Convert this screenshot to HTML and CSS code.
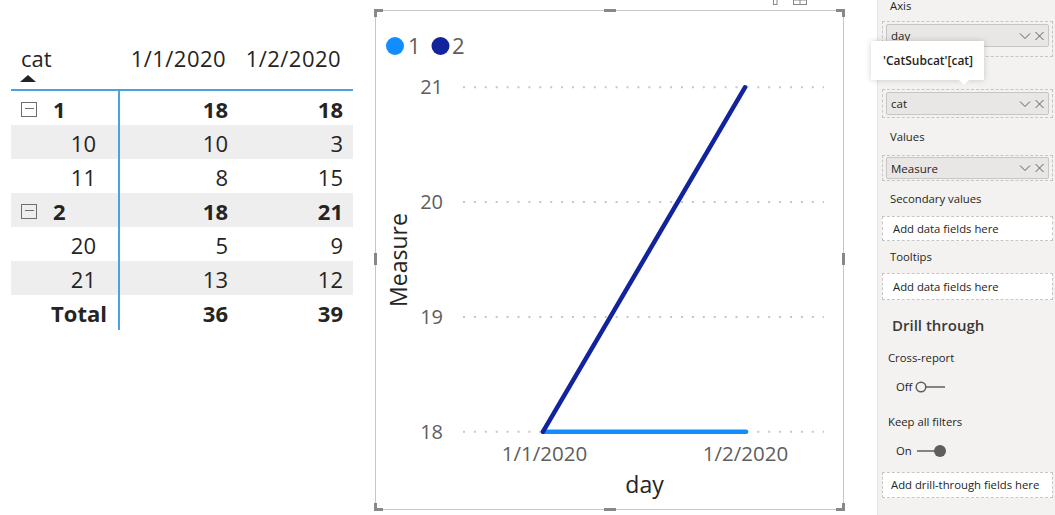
FILE: index.html
```html
<!DOCTYPE html>
<html>
<head>
<meta charset="utf-8">
<link rel="stylesheet" href="styles.css">
</head>
<body>
<div class="page">
  <section class="matrix">
    <div class="mhead">
      <div class="hcell hcat"><span>cat</span><i class="sort"></i></div>
      <div class="hcell num">1/1/2020</div>
      <div class="hcell num">1/2/2020</div>
    </div>
    <div class="row parent"><div class="c1"><span class="exp"></span>1</div><div class="n">18</div><div class="n">18</div></div>
    <div class="row alt"><div class="c1">10</div><div class="n">10</div><div class="n">3</div></div>
    <div class="row"><div class="c1">11</div><div class="n">8</div><div class="n">15</div></div>
    <div class="row parent alt"><div class="c1"><span class="exp"></span>2</div><div class="n">18</div><div class="n">21</div></div>
    <div class="row"><div class="c1">20</div><div class="n">5</div><div class="n">9</div></div>
    <div class="row alt"><div class="c1">21</div><div class="n">13</div><div class="n">12</div></div>
    <div class="row total"><div class="c1">Total</div><div class="n">36</div><div class="n">39</div></div>
  </section>

  <section class="chart">
    <svg class="topicons" width="40" height="11" viewBox="0 0 40 11">
      <rect x="1.5" y="-4" width="3.5" height="8.5" fill="none" stroke="#8a8886" stroke-width="1"/>
      <rect x="21.5" y="-4" width="13" height="8.5" fill="none" stroke="#8a8886" stroke-width="1"/>
      <line x1="28" y1="0" x2="28" y2="4.5" stroke="#8a8886" stroke-width="1"/>
      <line x1="21.5" y1="0" x2="34.5" y2="0" stroke="#8a8886" stroke-width="1"/>
    </svg>
    <svg class="plot" width="467" height="498" viewBox="0 0 467 498">
      <circle cx="19" cy="35" r="9" fill="#118DFF"/>
      <text x="32" y="43" class="legend">1</text>
      <circle cx="64.5" cy="35" r="9" fill="#12239E"/>
      <text x="76" y="43" class="legend">2</text>

      <g class="grid">
        <line x1="87" y1="76.3" x2="448" y2="76.3"/>
        <line x1="87" y1="191" x2="448" y2="191"/>
        <line x1="87" y1="305.9" x2="448" y2="305.9"/>
        <line x1="87" y1="420.7" x2="448" y2="420.7"/>
      </g>
      <g class="ylab">
        <text x="67" y="83">21</text>
        <text x="67" y="198">20</text>
        <text x="67" y="313">19</text>
        <text x="67" y="428">18</text>
      </g>
      <text class="axtitle" text-anchor="middle" transform="translate(31,249) rotate(-90)">Measure</text>

      <line x1="167" y1="420.7" x2="370" y2="420.7" stroke="#118DFF" stroke-width="4.5" stroke-linecap="round"/>
      <line x1="167" y1="420.7" x2="369" y2="76.3" stroke="#12239E" stroke-width="4.5" stroke-linecap="round"/>

      <g class="xlab">
        <text x="168.5" y="450" text-anchor="middle">1/1/2020</text>
        <text x="369.5" y="450" text-anchor="middle">1/2/2020</text>
      </g>
      <text class="axtitle" x="268.5" y="482" text-anchor="middle">day</text>
    </svg>
    <i class="h tl"></i><i class="h tr"></i><i class="h bl"></i><i class="h br"></i>
    <i class="h tc"></i><i class="h bc"></i><i class="h ml"></i><i class="h mr"></i>
  </section>

  <aside class="panel">
    <div class="lbl lbl-axis">Axis</div>
    <div class="well well-axis">
      <div class="pill"><span>day</span><span class="pill-icons"><svg width="26" height="12" viewBox="0 0 26 12"><polyline points="1,3.5 6,8.5 11,3.5" fill="none" stroke="#605e5c" stroke-width="1"/><path d="M16.5 2 L24.5 10 M24.5 2 L16.5 10" stroke="#605e5c" stroke-width="1"/></svg></span></div>
    </div>
    <div class="lbl lbl-legend">Legend</div>
    <div class="well">
      <div class="pill"><span>cat</span><span class="pill-icons"><svg width="26" height="12" viewBox="0 0 26 12"><polyline points="1,3.5 6,8.5 11,3.5" fill="none" stroke="#605e5c" stroke-width="1"/><path d="M16.5 2 L24.5 10 M24.5 2 L16.5 10" stroke="#605e5c" stroke-width="1"/></svg></span></div>
    </div>
    <div class="lbl lbl-values">Values</div>
    <div class="well well-values">
      <div class="pill"><span>Measure</span><span class="pill-icons"><svg width="26" height="12" viewBox="0 0 26 12"><polyline points="1,3.5 6,8.5 11,3.5" fill="none" stroke="#605e5c" stroke-width="1"/><path d="M16.5 2 L24.5 10 M24.5 2 L16.5 10" stroke="#605e5c" stroke-width="1"/></svg></span></div>
    </div>
    <div class="lbl lbl-sec">Secondary values</div>
    <div class="drop drop-sec">Add data fields here</div>
    <div class="lbl lbl-tt">Tooltips</div>
    <div class="drop drop-tt">Add data fields here</div>
    <div class="heading">Drill through</div>
    <div class="lbl lbl-cross">Cross-report</div>
    <div class="toggle">Off <svg width="36" height="14" viewBox="0 0 36 14"><circle cx="7" cy="7" r="4.8" fill="none" stroke="#605e5c" stroke-width="1.5"/><line x1="11.8" y1="7" x2="31" y2="7" stroke="#605e5c" stroke-width="1.5"/></svg></div>
    <div class="lbl lbl-keep">Keep all filters</div>
    <div class="toggle on">On <svg width="36" height="14" viewBox="0 0 36 14"><line x1="1" y1="7" x2="20" y2="7" stroke="#605e5c" stroke-width="1.5"/><circle cx="24" cy="7" r="6" fill="#605e5c"/></svg></div>
    <div class="drop drop-drill">Add drill-through fields here</div>

    <div class="tip">'CatSubcat'[cat]<i class="tip-arrow"></i></div>
  </aside>
</div>
</body>
</html>
```

FILE: styles.css
```css
* { box-sizing: border-box; }
html, body { margin: 0; padding: 0; background: #ffffff; }
body {
  width: 1055px;
  height: 515px;
  overflow: hidden;
  font-family: "Open Sans", "Noto Sans", sans-serif;
  color: #252423;
}
.page { display: flex; height: 515px; }

/* ---------- matrix ---------- */
.matrix { margin-left: 11px; width: 342px; flex: none; font-size: 22px; }
.mhead {
  display: grid;
  grid-template-columns: 109px 118px 115px;
  height: 91px;
  border-bottom: 2px solid #4aa3df;
}
.hcell { padding-top: 42px; line-height: 32px; white-space: nowrap; }
.hcat { padding-left: 10px; }
.hcell.num { text-align: right; padding-right: 12px; letter-spacing: 0.45px; }
.sort {
  display: block;
  width: 0; height: 0;
  border-left: 8px solid transparent;
  border-right: 8px solid transparent;
  border-bottom: 7px solid #252423;
  margin: 1px 0 0 -1px;
}
.row {
  display: grid;
  grid-template-columns: 109px 118px 115px;
  height: 34px;
  line-height: 34px;
}
.row.alt { background: #eeeeee; }
.row .c1 {
  border-right: 2px solid #4aa3df;
  text-align: right;
  padding-right: 22px;
  padding-top: 1px;
}
.row .n { text-align: right; padding-right: 10px; padding-top: 1px; }
.row.parent, .row.total { font-weight: 700; }
.row.parent .c1 {
  text-align: left;
  padding-left: 10px;
  display: flex;
  align-items: center;
  gap: 16px;
}
.row.total .c1 { padding-right: 11px; }
.exp {
  position: relative;
  width: 16px; height: 15px;
  border: 1.5px solid #6e6e6e;
  flex: none;
}
.exp::after {
  content: "";
  position: absolute;
  left: 2.5px; right: 2.5px; top: 5.25px;
  height: 1.5px;
  background: #6e6e6e;
}

/* ---------- chart ---------- */
.chart {
  position: relative;
  flex: none;
  margin: 10px 0 0 22px;
  width: 469px;
  height: 500px;
  border: 1px solid #c8c6c4;
}
.plot { display: block; font-family: "Open Sans", "Noto Sans", sans-serif; }
.topicons { position: absolute; left: 396px; top: -11px; overflow: visible; }
.legend { font-size: 22px; fill: #605e5c; }
.grid line { stroke: #c8c6c4; stroke-width: 2; stroke-dasharray: 2 8.9; }
.ylab text { font-size: 20px; fill: #605e5c; text-anchor: end; }
.xlab text { font-size: 20.5px; fill: #605e5c; }
.axtitle { font-size: 23px; fill: #252423; }

.h { position: absolute; background: #8a8886; }
.h.tl, .h.tr, .h.bl, .h.br { background: none; width: 9px; height: 8px; border-color: #8a8886; border-style: solid; border-width: 0; }
.h.tl { left: -2px; top: -2px; border-top-width: 3px; border-left-width: 3px; }
.h.tr { right: -2px; top: -2px; border-top-width: 3px; border-right-width: 3px; }
.h.bl { left: -2px; bottom: -2px; border-bottom-width: 3px; border-left-width: 3px; }
.h.br { right: -2px; bottom: -2px; border-bottom-width: 3px; border-right-width: 3px; }
.h.tc { left: 228px; top: -2px; width: 12px; height: 3px; }
.h.bc { left: 228px; bottom: -2px; width: 12px; height: 3px; }
.h.ml { left: -2px; top: 242px; width: 3px; height: 12px; }
.h.mr { right: -2px; top: 242px; width: 3px; height: 12px; }

/* ---------- panel ---------- */
.panel {
  position: relative;
  flex: 1;
  margin-left: 33px;
  background: #f3f2f1;
  border-left: 1px solid #e6e4e2;
  font-size: 11.3px;
  display: flex;
  flex-direction: column;
  align-items: flex-start;
}
.lbl { line-height: 16px; padding-left: 12px; white-space: nowrap; }
.lbl-axis { margin-top: -2px; }
.lbl-legend { margin-top: 6px; }
.lbl-values { margin-top: 11px; }
.lbl-sec { margin-top: 10px; }
.lbl-tt { margin-top: 8px; }
.lbl-cross { margin-top: 15px; padding-left: 10px; }
.lbl-keep { margin-top: 19px; padding-left: 10px; }

.well {
  margin: 10px 0 0 4px;
  width: 171px;
  border: 1px dashed #c8c6c4;
  padding: 2px 3px;
}
.well-axis { margin-top: 7px; padding-bottom: 9px; }
.well-values { padding: 1px 3px; }
.well-values .pill { height: 22px; }
.pill {
  display: flex;
  align-items: center;
  justify-content: space-between;
  height: 23px;
  background: #e8e7e6;
  border: 1px solid #c8c6c4;
  border-radius: 2px;
  padding: 0 3px 0 4px;
  font-size: 11.5px;
}
.pill-icons { display: flex; align-items: center; }
.pill-icons svg { display: block; }

.drop {
  margin: 9px 0 0 4px;
  width: 171px;
  height: 25px;
  line-height: 23px;
  background: #ffffff;
  border: 1px dashed #c8c6c4;
  padding-left: 10px;
  white-space: nowrap;
}
.drop-tt { margin-top: 8px; height: 27px; line-height: 25px; }
.heading {
  margin-top: 15px;
  padding-left: 14px;
  font-size: 15px;
  font-weight: 600;
  line-height: 20px;
  color: #3b3a39;
}
.toggle {
  display: flex;
  align-items: center;
  margin-top: 13px;
  padding-left: 18px;
  height: 16px;
  line-height: 16px;
  gap: 2px;
}
.toggle.on { gap: 4px; margin-top: 13px; }
.toggle svg { display: block; }
.drop-drill { margin-top: 13px; height: 26px; line-height: 24px; padding-left: 8px; }

.tip {
  position: absolute;
  left: -7px;
  top: 41px;
  width: 113px;
  height: 39px;
  background: #ffffff;
  box-shadow: 0 0 6px rgba(0, 0, 0, 0.18);
  font-weight: 600;
  font-size: 12px;
  line-height: 39px;
  padding-left: 12px;
  white-space: nowrap;
}
.tip-arrow {
  position: absolute;
  left: 88px;
  bottom: -5px;
  width: 0; height: 0;
  border-left: 5px solid transparent;
  border-right: 5px solid transparent;
  border-top: 5px solid #ffffff;
}
```
